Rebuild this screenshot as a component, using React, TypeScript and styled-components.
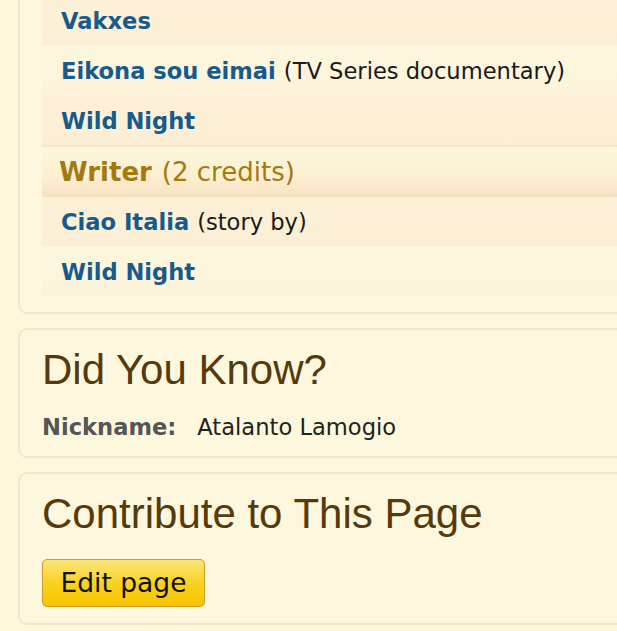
import styled, { createGlobalStyle } from 'styled-components';

const GlobalStyle = createGlobalStyle`
  html, body {
    margin: 0;
    padding: 0;
    background: #fdf7dc;
    overflow: hidden;
  }
  body {
    font-family: "DejaVu Sans", Verdana, sans-serif;
  }
`;

const Column = styled.div`
  display: flex;
  flex-direction: column;
  gap: 14px;
  width: 760px;
  padding-left: 18px;
`;

const Panel = styled.section<{ $cut?: boolean }>`
  background: #fdf8dd;
  border: 2px solid #f3e7cb;
  border-radius: 9px;
  padding: ${(p) => (p.$cut ? '0 0 16px 22px' : '16px 22px 16px 22px')};
  ${(p) =>
    p.$cut &&
    `
    margin-top: -4px;
    border-top: none;
    border-top-left-radius: 0;
    border-top-right-radius: 0;
  `}
`;

const FilmoList = styled.div`
  display: flex;
  flex-direction: column;
`;

const FilmoRow = styled.div<{ $odd: boolean }>`
  height: 49px;
  display: flex;
  align-items: center;
  padding-left: 19px;
  font-size: 22.6px;
  color: #1a1a1a;
  white-space: nowrap;
  background: ${(p) =>
    p.$odd
      ? 'linear-gradient(#fcf1d8, #fbeed4)'
      : 'linear-gradient(#fdf7df, #fcf3da)'};
  & + & {
    border-top: 1px solid #fdf6df;
  }
  a {
    color: #165b8c;
    font-weight: bold;
    text-decoration: none;
    margin-right: 8px;
  }
`;

const SectionHead = styled.div`
  height: 50px;
  display: flex;
  align-items: center;
  padding-left: 17px;
  border-top: 2px solid #f5e6cb;
  font-size: 26px;
  color: #a47a0e;
  white-space: nowrap;
  background: linear-gradient(#fdf7dc 0%, #fcefd2 60%, #f8e0bf 100%);
  b {
    margin-right: 10px;
  }
`;

const Heading = styled.h2`
  margin: 0;
  font-family: "Liberation Sans", Arial, sans-serif;
  font-weight: normal;
  font-size: 42px;
  line-height: 48px;
  color: #573a0c;
  white-space: nowrap;
`;

const FactLine = styled.div`
  margin-top: 20px;
  font-size: 22.6px;
  line-height: 26px;
  color: #222;
  display: flex;
  gap: 21px;
  h4 {
    margin: 0;
    font-size: 22.6px;
    color: #555;
  }
`;

const EditButton = styled.button`
  margin-top: 21px;
  width: 163px;
  height: 48px;
  font-family: "DejaVu Sans", Verdana, sans-serif;
  font-size: 26.5px;
  color: #111;
  border: 1px solid #d19a24;
  border-radius: 5px;
  background: linear-gradient(#fbe57a, #f9d11a 55%, #f6c400);
  padding: 0 0 2px 0;
  cursor: pointer;
`;

interface ICredit {
  title: string;
  note?: string;
}

const actorCredits: ICredit[] = [
  { title: 'Vakxes' },
  { title: 'Eikona sou eimai', note: '(TV Series documentary)' },
  { title: 'Wild Night' },
];

const writerCredits: ICredit[] = [
  { title: 'Ciao Italia', note: '(story by)' },
  { title: 'Wild Night' },
];

const App = () => {
  return (
    <>
      <GlobalStyle />
      <Column>
        <Panel $cut>
          <FilmoList>
            {actorCredits.map((c, i) => (
              <FilmoRow key={c.title} $odd={i % 2 === 0}>
                <a href="#">{c.title}</a>
                {c.note}
              </FilmoRow>
            ))}
            <SectionHead>
              <b>Writer</b> (2 credits)
            </SectionHead>
            {writerCredits.map((c, i) => (
              <FilmoRow key={c.title} $odd={i % 2 === 0}>
                <a href="#">{c.title}</a>
                {c.note}
              </FilmoRow>
            ))}
          </FilmoList>
        </Panel>
        <Panel>
          <Heading>Did You Know?</Heading>
          <FactLine>
            <h4>Nickname:</h4>
            <span>Atalanto Lamogio</span>
          </FactLine>
        </Panel>
        <Panel>
          <Heading>Contribute to This Page</Heading>
          <EditButton>Edit page</EditButton>
        </Panel>
      </Column>
    </>
  );
};

export default App;
